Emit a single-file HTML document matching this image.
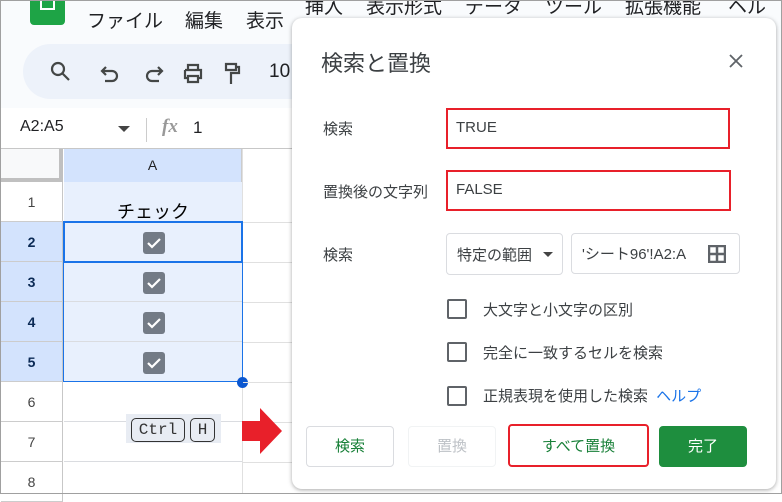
<!DOCTYPE html>
<html><head><meta charset="utf-8"><style>
*{box-sizing:border-box;margin:0;padding:0}
body{width:782px;height:494px;overflow:hidden;position:relative;background:#fff;font-family:"Liberation Sans","Noto Sans CJK JP",sans-serif;color:#202124}
.a{position:absolute}
.frame{position:absolute;left:0;top:0;width:782px;height:494px;border:1px solid #a0a0a0;pointer-events:none}
.menu span{position:absolute;top:6px;font-size:19px;color:#202124}
.rowh{position:absolute;left:1px;width:62px;height:40px;border-bottom:1px solid #ccc;border-right:1px solid #c7c7c7;font-size:14px;text-align:center;line-height:40px;color:#444}
.sel{background:#d3e3fd;font-weight:bold;color:#0b2a55}
.cell{position:absolute;left:64px;width:178px;height:40px;border-bottom:1px solid #dadce0}
.cb{position:absolute;left:79px;top:10px;width:22px;height:22px;background:#737b86;border-radius:3px}
.hl{position:absolute;left:243px;width:50px;height:1px;background:#e0e0e0}
.lbl{position:absolute;font-size:15px;color:#3c4043}
.chk{position:absolute;left:447px;width:20px;height:20px;border:2px solid #5f6368;border-radius:2px}
.ct{position:absolute;left:483px;font-size:15px;color:#3c4043}
.btn{position:absolute;top:426px;height:41px;border:1px solid #dadce0;border-radius:4px;font-size:15px;text-align:center;line-height:39px;color:#188038}
</style></head><body>
<div class="a" style="left:0;top:0;width:782px;height:150px;background:#f9fbfd"></div>
<div class="a" style="left:30px;top:0;width:35px;height:25px;background:#1ea446;border-radius:0 0 4px 4px"></div>
<div class="a" style="left:40px;top:0;width:15px;height:10px;border:2px solid #fff;border-top:none"></div>
<div class="menu"><span style="left:87px">ファイル</span><span style="left:185px">編集</span><span style="left:246px">表示</span><span style="left:305px;top:-8px">挿入</span><span style="left:366px;top:-8px">表示形式</span><span style="left:465px;top:-8px">データ</span><span style="left:545px;top:-8px">ツール</span><span style="left:625px;top:-8px">拡張機能</span><span style="left:728px;top:-8px">ヘルプ</span></div>
<div class="a" style="left:23px;top:44px;width:300px;height:55px;background:#edf2fa;border-radius:28px"></div>
<svg class="a" style="left:48px;top:60px" width="200" height="26" viewBox="0 0 200 26" fill="none" stroke="#444746" stroke-width="2.2">
<circle cx="10" cy="9" r="6"/><path d="M14.5 13.5 L21 20"/>
<path d="M55 11 h9 a5 5 0 0 1 0 10 h-7 M58 7 l-4 4 4 4"/>
<path d="M113 11 h-9 a5 5 0 0 0 0 10 h7 M110 7 l4 4 -4 4"/>
<path d="M137 10 h16 v8 h-3 M140 18 h-3 v-8 M140 10 v-5 h10 v5 M140 16 h10 v6 h-10 z"/>
<path d="M178 4 h10 v6 h-10 z M188 7 h3 v6 h-8 v4 M183 17 v7"/>
</svg>
<div class="a" style="left:269px;top:61px;font-size:19px;color:#202124">10</div>
<div class="a" style="left:0;top:108px;width:300px;height:42px;background:#fff"></div>
<div class="a" style="left:20px;top:118px;font-size:16px">A2:A5</div>
<div class="a" style="left:118px;top:126px;border:6px solid transparent;border-top:6px solid #444;border-bottom:none"></div>
<div class="a" style="left:146px;top:118px;width:1px;height:24px;background:#ccc"></div>
<div class="a" style="left:162px;top:116px;font-size:19px;font-style:italic;font-family:'Liberation Serif',serif;color:#999;font-weight:bold">fx</div>
<div class="a" style="left:193px;top:118px;font-size:17px">1</div>
<div class="a" style="left:0;top:148px;width:300px;height:1px;background:#c7c7c7"></div>
<div class="a" style="left:1px;top:149px;width:62px;height:33px;background:#f8f9fa;border-right:4px solid #c0c0c0;border-bottom:4px solid #c0c0c0"></div>
<div class="a" style="left:64px;top:149px;width:178px;height:33px;background:#d3e3fd;text-align:center;line-height:33px;font-size:14px;border-right:1px solid #ccc">A</div>
<div class="a" style="left:64px;top:182px;width:178px;height:200px;background:#e8f0fd"></div>
<div class="a" style="left:242px;top:149px;width:1px;height:345px;background:#e0e0e0"></div>
<div class="rowh" style="top:182px">1</div>
<div class="rowh sel" style="top:222px">2</div>
<div class="rowh sel" style="top:262px">3</div>
<div class="rowh sel" style="top:302px">4</div>
<div class="rowh sel" style="top:342px">5</div>
<div class="rowh" style="top:382px">6</div>
<div class="rowh" style="top:422px">7</div>
<div class="rowh" style="top:462px">8</div>
<div class="cell" style="top:182px"><div style="position:absolute;left:53px;top:16px;font-size:18px;color:#000">チェック</div></div>
<div class="cell" style="top:222px"><svg class="cb" viewBox="0 0 22 22"><path d="M5 11 l4 4 8-8" stroke="#fff" stroke-width="2.2" fill="none"/></svg></div>
<div class="cell" style="top:262px"><svg class="cb" viewBox="0 0 22 22"><path d="M5 11 l4 4 8-8" stroke="#fff" stroke-width="2.2" fill="none"/></svg></div>
<div class="cell" style="top:302px"><svg class="cb" viewBox="0 0 22 22"><path d="M5 11 l4 4 8-8" stroke="#fff" stroke-width="2.2" fill="none"/></svg></div>
<div class="cell" style="top:342px"><svg class="cb" viewBox="0 0 22 22"><path d="M5 11 l4 4 8-8" stroke="#fff" stroke-width="2.2" fill="none"/></svg></div>
<div class="cell" style="top:382px"></div><div class="cell" style="top:422px"></div>
<div class="a" style="left:63px;top:221px;width:180px;height:42px;border:2px solid #1a73e8"></div>
<div class="a" style="left:63px;top:221px;width:180px;height:161px;border:1px solid #1a73e8"></div>
<div class="a" style="left:237px;top:377px;width:11px;height:11px;border-radius:50%;background:#0b57d0"></div>
<div class="hl" style="top:222px"></div><div class="hl" style="top:262px"></div><div class="hl" style="top:302px"></div><div class="hl" style="top:342px"></div><div class="hl" style="top:382px"></div><div class="hl" style="top:422px"></div><div class="hl" style="top:462px"></div>
<div class="a" style="left:126px;top:414px;width:95px;height:29px;background:#e8ecf3"></div>
<div class="a" style="left:131px;top:418px;width:54px;height:24px;border:1px solid #333;border-radius:5px;font-family:'Liberation Mono',monospace;font-size:16px;text-align:center;line-height:22px;color:#333">Ctrl</div>
<div class="a" style="left:190px;top:418px;width:25px;height:24px;border:1px solid #333;border-radius:5px;font-family:'Liberation Mono',monospace;font-size:16px;text-align:center;line-height:22px;color:#333">H</div>
<svg class="a" style="left:242px;top:408px" width="40" height="46"><path d="M0 13 h18 v-13 l22 23 -22 23 v-13 h-18z" fill="#e8202a"/></svg>
<div class="a" style="left:292px;top:18px;width:484px;height:471px;background:#fff;border-radius:10px;box-shadow:0 1px 4px rgba(0,0,0,.35)"></div>
<div class="a" style="left:321px;top:46px;font-size:22px;color:#3c4043">検索と置換</div>
<svg class="a" style="left:729px;top:54px" width="14" height="14"><path d="M1 1 L13 13 M13 1 L1 13" stroke="#5f6368" stroke-width="1.8"/></svg>
<div class="lbl" style="left:323px;top:118px">検索</div>
<div class="a" style="left:446px;top:108px;width:284px;height:41px;border:2px solid #e8202a"></div>
<div class="a" style="left:456px;top:119px;font-size:15px;color:#3c4043">TRUE</div>
<div class="lbl" style="left:323px;top:181px">置換後の文字列</div>
<div class="a" style="left:446px;top:170px;width:285px;height:41px;border:2px solid #e8202a"></div>
<div class="a" style="left:456px;top:181px;font-size:15px;color:#3c4043">FALSE</div>
<div class="lbl" style="left:323px;top:244px">検索</div>
<div class="a" style="left:446px;top:233px;width:117px;height:42px;border:1px solid #dadce0;border-radius:4px"></div>
<div class="a" style="left:457px;top:244px;font-size:15px;color:#3c4043">特定の範囲</div>
<div class="a" style="left:543px;top:252px;border:5px solid transparent;border-top:5px solid #444;border-bottom:none"></div>
<div class="a" style="left:571px;top:233px;width:169px;height:41px;border:1px solid #dadce0;border-radius:4px"></div>
<div class="a" style="left:582px;top:243px;font-size:15px;color:#3c4043">'シート96'!A2:A</div>
<svg class="a" style="left:708px;top:245px" width="18" height="18"><path d="M1 1h16v16h-16z M9 1v16 M1 9h16" stroke="#5f6368" stroke-width="2.5" fill="none"/></svg>
<div class="chk" style="top:299px"></div><div class="ct" style="top:299px">大文字と小文字の区別</div>
<div class="chk" style="top:342px"></div><div class="ct" style="top:342px">完全に一致するセルを検索</div>
<div class="chk" style="top:386px"></div><div class="ct" style="top:385px">正規表現を使用した検索 <span style="color:#1a73e8;margin-left:4px">ヘルプ</span></div>
<div class="btn" style="left:306px;width:88px">検索</div>
<div class="btn" style="left:408px;width:88px;border-color:#f1f3f4;color:#bdc1c6">置換</div>
<div class="btn" style="left:508px;width:141px;border:2px solid #e8202a;height:43px;top:424px;line-height:41px">すべて置換</div>
<div class="btn" style="left:659px;width:88px;background:#1e8e3e;border-color:#1e8e3e;color:#fff">完了</div>
<div class="frame"></div>
</body></html>
